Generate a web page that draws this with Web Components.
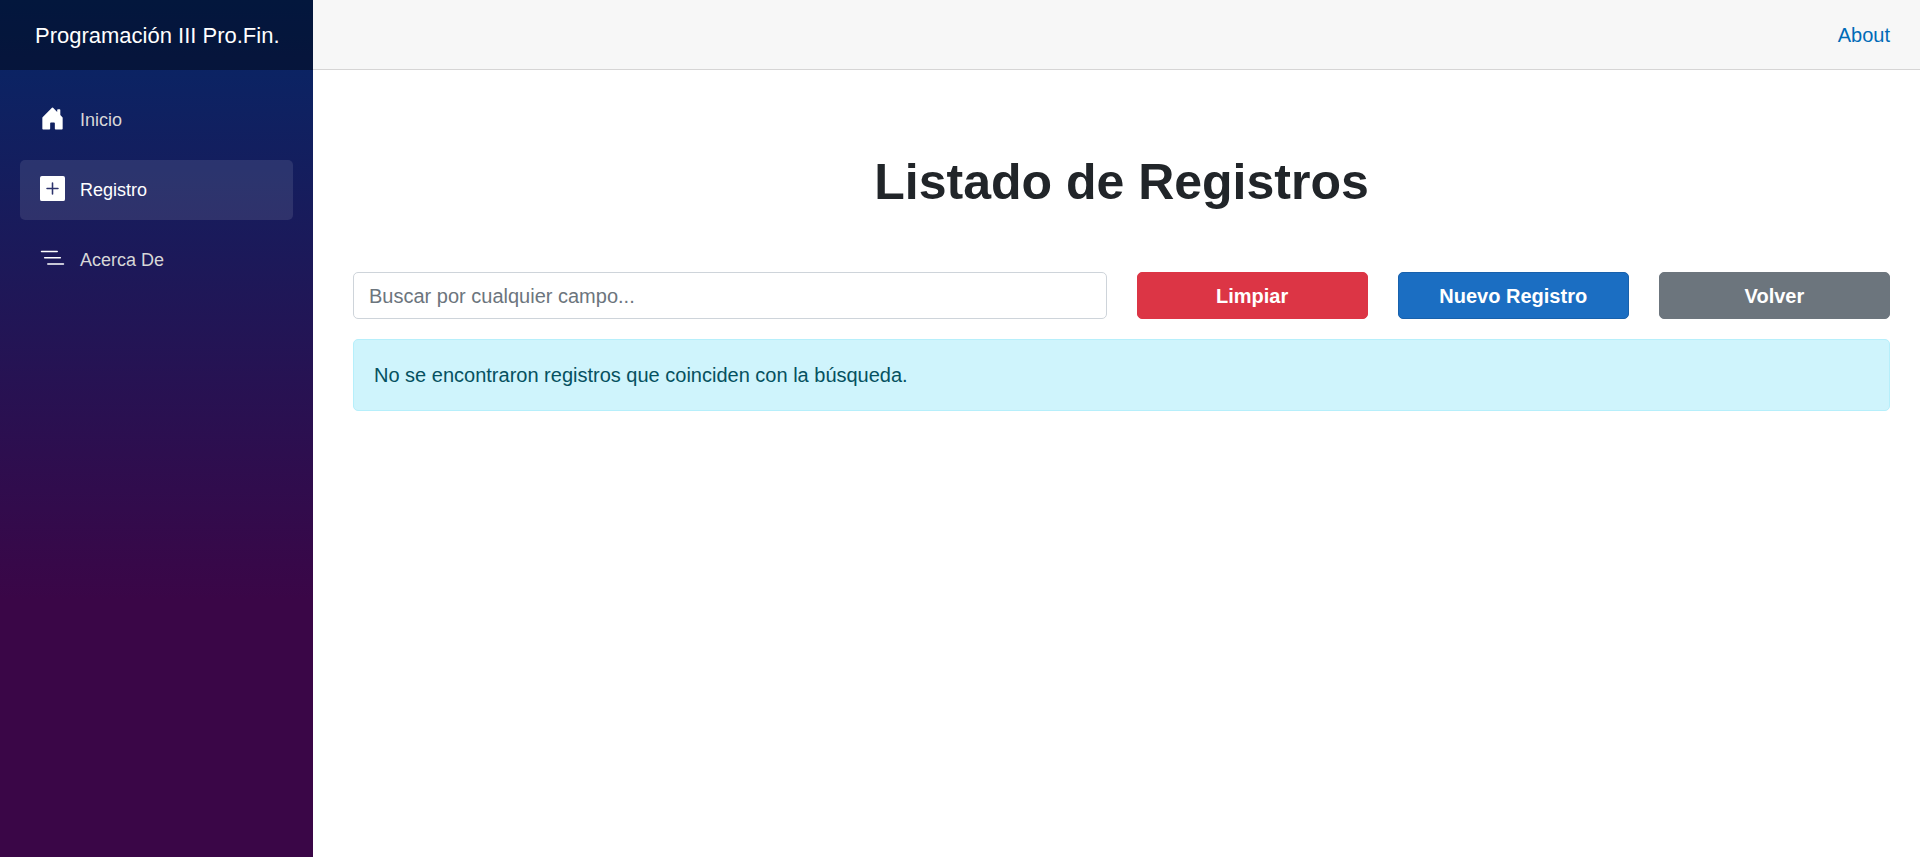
<!DOCTYPE html>
<html lang="es">
<head>
<meta charset="utf-8">
<meta name="viewport" content="width=device-width, initial-scale=1">
<title>Listado de Registros</title>
<style>
  body {
    margin: 0;
    font: 20px/30px "Helvetica Neue", "Liberation Sans", Arial, sans-serif;
    color: #212529;
    background: #fff;
  }
</style>
</head>
<body>
<app-layout>
  <nav-menu slot="sidebar" brand="Programación III Pro.Fin.">
    <nav-item icon="house" href="#inicio">Inicio</nav-item>
    <nav-item icon="plus" href="#registro" active>Registro</nav-item>
    <nav-item icon="list" href="#acerca">Acerca De</nav-item>
  </nav-menu>
  <top-bar slot="top"></top-bar>
  <registro-page></registro-page>
</app-layout>

<script>
class BaseElement extends HTMLElement {
  constructor() {
    super();
    this.attachShadow({ mode: "open" });
  }
  connectedCallback() {
    this.shadowRoot.innerHTML = this.render();
  }
}

class AppLayout extends BaseElement {
  render() {
    return `
      <style>
        :host { display: flex; min-height: 100vh; }
        aside { flex: none; width: 313px; display: flex; background: linear-gradient(180deg, rgb(5, 39, 103) 0%, #3a0647 70%); }
        .main { flex: 1; min-width: 0; }
        main { padding: 22px 30px 0 40px; }
      </style>
      <aside><slot name="sidebar"></slot></aside>
      <div class="main">
        <slot name="top"></slot>
        <main><slot></slot></main>
      </div>`;
  }
}

class NavMenu extends BaseElement {
  render() {
    return `
      <style>
        :host { display: block; flex: 1; }
        header { height: 70px; display: flex; align-items: center; padding-left: 35px; background: rgba(0, 0, 0, 0.4); }
        header a { font-size: 22px; line-height: 33px; color: #fff; text-decoration: none; white-space: nowrap; }
        nav { display: flex; flex-direction: column; gap: 10px; padding: 20px; }
      </style>
      <header><a href="#">${this.getAttribute("brand")}</a></header>
      <nav><slot></slot></nav>`;
  }
}

const ICONS = {
  house: "M6.5 14.5v-3.505c0-.245.25-.495.5-.495h2c.25 0 .5.25.5.5v3.5a.5.5 0 0 0 .5.5h4a.5.5 0 0 0 .5-.5v-7a.5.5 0 0 0-.146-.354L13 5.793V2.5a.5.5 0 0 0-.5-.5h-1a.5.5 0 0 0-.5.5v1.293L8.354 1.146a.5.5 0 0 0-.708 0l-6 6A.5.5 0 0 0 1.5 7.5v7a.5.5 0 0 0 .5.5h4a.5.5 0 0 0 .5-.5Z",
  plus: "M1.2 0A1.2 1.2 0 0 0 0 1.2v13.6A1.2 1.2 0 0 0 1.2 16h13.6a1.2 1.2 0 0 0 1.2-1.2V1.2A1.2 1.2 0 0 0 14.8 0H1.2zM8.5 4.5v3h3a.5.5 0 0 1 0 1h-3v3a.5.5 0 0 1-1 0v-3h-3a.5.5 0 0 1 0-1h3v-3a.5.5 0 0 1 1 0z",
  list: "M4.5 11.5A.5.5 0 0 1 5 11h10a.5.5 0 0 1 0 1H5a.5.5 0 0 1-.5-.5zm-2-4A.5.5 0 0 1 3 7h10a.5.5 0 0 1 0 1H3a.5.5 0 0 1-.5-.5zm-2-4A.5.5 0 0 1 1 3h10a.5.5 0 0 1 0 1H1a.5.5 0 0 1-.5-.5z"
};

class NavItem extends BaseElement {
  render() {
    return `
      <style>
        :host { display: block; }
        a { display: flex; align-items: center; gap: 15px; height: 60px; padding: 0 20px; border-radius: 5px; font-size: 18px; color: #d7d7d7; text-decoration: none; }
        :host([active]) a { background: rgba(255, 255, 255, 0.1); color: #fff; }
        a:hover { color: #fff; }
        svg { flex: none; width: 25px; height: 25px; margin-bottom: 3px; fill: #fff; }
      </style>
      <a href="${this.getAttribute("href")}">
        <svg viewBox="0 0 16 16" aria-hidden="true"><path fill-rule="evenodd" d="${ICONS[this.getAttribute("icon")]}"/></svg>
        <span><slot></slot></span>
      </a>`;
  }
}

class TopBar extends BaseElement {
  render() {
    return `
      <style>
        :host { display: flex; align-items: center; justify-content: flex-end; box-sizing: border-box; height: 70px; padding: 0 30px 0 40px; background: #f7f7f7; border-bottom: 1px solid #d6d5d5; }
        a { color: #006bb7; text-decoration: none; }
        a:hover { text-decoration: underline; }
      </style>
      <a href="#about">About</a>`;
  }
}

class AppButton extends BaseElement {
  render() {
    return `
      <style>
        :host { display: block; --bg: #6c757d; --edge: #6c757d; }
        :host([variant="danger"]) { --bg: #dc3545; --edge: #dc3545; }
        :host([variant="primary"]) { --bg: #1b6ec2; --edge: #1861ac; }
        button { box-sizing: border-box; width: 100%; height: 47px; padding: 0 15px; border: 1px solid var(--edge); border-radius: 5px; background: var(--bg); color: #fff; font: inherit; font-weight: 700; cursor: pointer; }
      </style>
      <button type="button"><slot></slot></button>`;
  }
}

class InfoAlert extends BaseElement {
  render() {
    return `
      <style>
        :host { display: block; padding: 20px; border: 1px solid #b6effb; border-radius: 5px; background: #cff4fc; color: #055160; }
      </style>
      <div role="alert"><slot></slot></div>`;
  }
}

class RegistroPage extends BaseElement {
  render() {
    return `
      <style>
        :host { display: block; }
        h1 { margin: 60px 0; font-size: 50px; line-height: 60px; font-weight: 700; text-align: center; }
        form { display: grid; grid-template-columns: repeat(12, minmax(0, 1fr)); gap: 30px; margin-bottom: 20px; }
        .search { grid-column: span 6; }
        app-button { grid-column: span 2; }
        input { display: block; box-sizing: border-box; width: 100%; height: 47px; padding: 1px 15px 0; border: 1px solid #ced4da; border-radius: 5px; background: #fff; color: #212529; font: inherit; }
        input::placeholder { color: #6c757d; opacity: 1; }
      </style>
      <h1>Listado de Registros</h1>
      <form>
        <div class="search"><input type="text" aria-label="Buscar registros" placeholder="Buscar por cualquier campo..."></div>
        <app-button variant="danger">Limpiar</app-button>
        <app-button variant="primary">Nuevo Registro</app-button>
        <app-button>Volver</app-button>
      </form>
      <info-alert>No se encontraron registros que coinciden con la búsqueda.</info-alert>`;
  }
}

customElements.define("app-layout", AppLayout);
customElements.define("nav-menu", NavMenu);
customElements.define("nav-item", NavItem);
customElements.define("top-bar", TopBar);
customElements.define("app-button", AppButton);
customElements.define("info-alert", InfoAlert);
customElements.define("registro-page", RegistroPage);
</script>
</body>
</html>
